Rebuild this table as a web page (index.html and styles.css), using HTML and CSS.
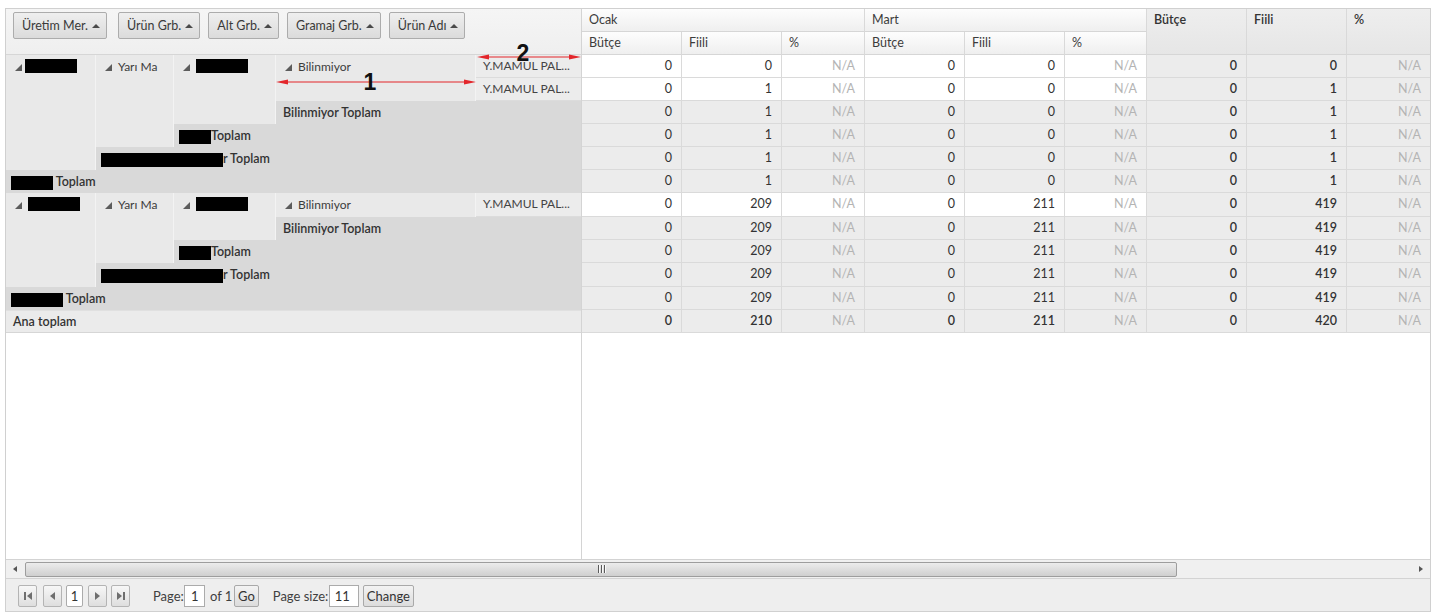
FILE: index.html
```html
<!DOCTYPE html>
<html lang="tr">
<head>
<meta charset="utf-8">
<title>Pivot</title>
<link rel="stylesheet" href="styles.css">
</head>
<body>
<div class="page">
  <div class="pivot">
    <div class="main">
      <div class="left">
        <div class="fieldbar">
          <button class="field f1">Üretim Mer. <span class="up"></span></button>
          <button class="field">Ürün Grb. <span class="up"></span></button>
          <button class="field">Alt Grb. <span class="up"></span></button>
          <button class="field">Gramaj Grb. <span class="up"></span></button>
          <button class="field">Ürün Adı <span class="up"></span></button>
        </div>
        <div class="rowheads">
          <div class="h rs5"><span class="hl"><i class="tri"></i><b class="rx rx52 pull"></b></span></div>
          <div class="h rs4"><span class="hl"><i class="tri"></i>Yarı Ma</span></div>
          <div class="h rs3"><span class="hl"><i class="tri"></i><b class="rx rx52"></b></span></div>
          <div class="h rs2"><span class="hl"><i class="tri"></i>Bilinmiyor</span></div>
          <div class="leaf">Y.MAMUL PAL...</div>
          <div class="leaf">Y.MAMUL PAL...</div>
          <div class="tot cs2 p7">Bilinmiyor Toplam</div>
          <div class="tot cs3"><b class="rx rx32"></b>Toplam</div>
          <div class="tot cs4"><b class="rx rx122"></b>r Toplam</div>
          <div class="tot cs5"><b class="rx rx41"></b> Toplam</div>

          <div class="h rs4"><span class="hl"><i class="tri"></i><b class="rx rx52"></b></span></div>
          <div class="h rs3"><span class="hl"><i class="tri"></i>Yarı Ma</span></div>
          <div class="h rs2"><span class="hl"><i class="tri"></i><b class="rx rx52"></b></span></div>
          <div class="h"><span class="hl"><i class="tri"></i>Bilinmiyor</span></div>
          <div class="leaf">Y.MAMUL PAL...</div>
          <div class="tot cs2 p7">Bilinmiyor Toplam</div>
          <div class="tot cs3"><b class="rx rx32"></b>Toplam</div>
          <div class="tot cs4"><b class="rx rx122"></b>r Toplam</div>
          <div class="tot cs5"><b class="rx rx52"></b> Toplam</div>
          <div class="grand cs5">Ana toplam</div>
        </div>
      </div>

      <div class="right">
        <div class="colheads">
          <div class="hd">Ocak</div>
          <div class="hd">Mart</div>
          <div class="hd ht">Bütçe</div>
          <div class="hd ht">Fiili</div>
          <div class="hd ht last">%</div>
          <div class="hd">Bütçe</div>
          <div class="hd">Fiili</div>
          <div class="hd">%</div>
          <div class="hd">Bütçe</div>
          <div class="hd">Fiili</div>
          <div class="hd">%</div>
        </div>
        <div class="cells">
          <div class="d w">0</div><div class="d w">0</div><div class="d w na">N/A</div><div class="d w">0</div><div class="d w">0</div><div class="d w na">N/A</div><div class="d b">0</div><div class="d b">0</div><div class="d na last">N/A</div>
          <div class="d w">0</div><div class="d w">1</div><div class="d w na">N/A</div><div class="d w">0</div><div class="d w">0</div><div class="d w na">N/A</div><div class="d b">0</div><div class="d b">1</div><div class="d na last">N/A</div>
          <div class="d">0</div><div class="d">1</div><div class="d na">N/A</div><div class="d">0</div><div class="d">0</div><div class="d na">N/A</div><div class="d b">0</div><div class="d b">1</div><div class="d na last">N/A</div>
          <div class="d">0</div><div class="d">1</div><div class="d na">N/A</div><div class="d">0</div><div class="d">0</div><div class="d na">N/A</div><div class="d b">0</div><div class="d b">1</div><div class="d na last">N/A</div>
          <div class="d">0</div><div class="d">1</div><div class="d na">N/A</div><div class="d">0</div><div class="d">0</div><div class="d na">N/A</div><div class="d b">0</div><div class="d b">1</div><div class="d na last">N/A</div>
          <div class="d">0</div><div class="d">1</div><div class="d na">N/A</div><div class="d">0</div><div class="d">0</div><div class="d na">N/A</div><div class="d b">0</div><div class="d b">1</div><div class="d na last">N/A</div>
          <div class="d w">0</div><div class="d w">209</div><div class="d w na">N/A</div><div class="d w">0</div><div class="d w">211</div><div class="d w na">N/A</div><div class="d b">0</div><div class="d b">419</div><div class="d na last">N/A</div>
          <div class="d">0</div><div class="d">209</div><div class="d na">N/A</div><div class="d">0</div><div class="d">211</div><div class="d na">N/A</div><div class="d b">0</div><div class="d b">419</div><div class="d na last">N/A</div>
          <div class="d">0</div><div class="d">209</div><div class="d na">N/A</div><div class="d">0</div><div class="d">211</div><div class="d na">N/A</div><div class="d b">0</div><div class="d b">419</div><div class="d na last">N/A</div>
          <div class="d">0</div><div class="d">209</div><div class="d na">N/A</div><div class="d">0</div><div class="d">211</div><div class="d na">N/A</div><div class="d b">0</div><div class="d b">419</div><div class="d na last">N/A</div>
          <div class="d">0</div><div class="d">209</div><div class="d na">N/A</div><div class="d">0</div><div class="d">211</div><div class="d na">N/A</div><div class="d b">0</div><div class="d b">419</div><div class="d na last">N/A</div>
          <div class="d b">0</div><div class="d b">210</div><div class="d na">N/A</div><div class="d b">0</div><div class="d b">211</div><div class="d na">N/A</div><div class="d b">0</div><div class="d b">420</div><div class="d na last">N/A</div>
        </div>
      </div>
    </div>

    <div class="hscroll">
      <span class="sarrow"><i class="tl"></i></span>
      <div class="track"><div class="thumb"><span class="grip"><i></i><i></i><i></i></span></div></div>
      <span class="sarrow"><i class="tr"></i></span>
    </div>

    <div class="pager">
      <button class="pb"><i class="bar"></i><i class="tl"></i></button>
      <button class="pb m6"><i class="tl"></i></button>
      <span class="pcur">1</span>
      <button class="pb m5"><i class="tr"></i></button>
      <button class="pb m4"><i class="tr"></i><i class="bar"></i></button>
      <span class="plabel">Page:</span>
      <span class="pin pin1">1</span>
      <span class="ptext">of 1</span>
      <button class="tb">Go</button>
      <span class="plabel size">Page size:</span>
      <span class="pin pin2">11</span>
      <button class="tb m4">Change</button>
    </div>
  </div>

  <svg class="annot" width="1437" height="614" viewBox="0 0 1437 614" aria-hidden="true">
    <line x1="283" y1="82" x2="469" y2="82" stroke="#e3262b" stroke-width="1.2"/>
    <polygon points="276,82 288,79.5 288,84.5" fill="#e3262b"/>
    <polygon points="476,82 464,79.5 464,84.5" fill="#e3262b"/>
    <text x="370" y="90" class="anum" text-anchor="middle">1</text>
    <line x1="484" y1="57" x2="574" y2="57" stroke="#e3262b" stroke-width="1.2"/>
    <polygon points="477,57 489,54.5 489,59.5" fill="#e3262b"/>
    <polygon points="581,57 569,54.5 569,59.5" fill="#e3262b"/>
    <text x="523" y="61" class="anum" text-anchor="middle">2</text>
  </svg>
</div>
</body>
</html>
```

FILE: styles.css
```css
* { box-sizing: border-box; margin: 0; padding: 0; }
html, body { background: #fff; }
body {
  font-family: "Lato", "Noto Sans", sans-serif;
  font-size: 12px;
  color: #333;
}
.page { position: relative; padding: 8px 6px 0 5px; }
.pivot {
  height: 604px;
  border: 1px solid #d0d0d0;
  display: flex;
  flex-direction: column;
}
.main { height: 550px; display: flex; }

/* ---------- left pane ---------- */
.left {
  width: 576px;
  border-right: 1px solid #d4d4d4;
  display: flex;
  flex-direction: column;
}
.fieldbar {
  height: 46px;
  display: flex;
  align-items: flex-start;
  gap: 8px;
  padding: 3px 0 0 7px;
  background: linear-gradient(#f5f5f5, #efefef);
  border-bottom: 1px solid #d6d6d6;
}
.field {
  font: inherit;
  font-size: 12.5px;
  color: #3a3a3a;
  height: 27px;
  padding: 0 6px 0 8px;
  display: flex;
  align-items: center;
  gap: 4px;
  border: 1px solid #acacac;
  border-radius: 2px;
  background: linear-gradient(#efefef, #dbdbdb);
}
.field.f1 { margin-right: 3px; }
.up {
  width: 0; height: 0;
  border-left: 4px solid transparent;
  border-right: 4px solid transparent;
  border-bottom: 4px solid #4a4a4a;
}
.rowheads {
  display: grid;
  grid-template-columns: 90px 78px 102px 200px 105px;
  grid-template-rows: 23px 23px 23px 23px 23px 23px 24px 23px 23px 24px 23px 23px;
}
.rs2 { grid-row: span 2; }
.rs3 { grid-row: span 3; }
.rs4 { grid-row: span 4; }
.rs5 { grid-row: span 5; }
.cs2 { grid-column: span 2; }
.cs3 { grid-column: span 3; }
.cs4 { grid-column: span 4; }
.cs5 { grid-column: span 5; }

.h {
  background: #e9e9e9;
  border-right: 1px solid #f3f3f3;
  padding-left: 9px;
  color: #3c3c3c;
}
.hl { display: flex; align-items: center; gap: 6px; height: 22px; }
.tri {
  display: block;
  width: 0; height: 0;
  border-left: 7px solid transparent;
  border-bottom: 7px solid #5c5c5c;
  margin-top: 2px;
}
.rx {
  display: inline-block;
  height: 14px;
  background: #000;
  vertical-align: middle;
}
.rx52 { width: 52px; }
.rx32 { width: 32px; }
.rx122 { width: 122px; }
.rx41 { width: 42px; }
.pull { margin-left: -3px; }

.leaf {
  background: #ececec;
  border-bottom: 1px solid #dcdcdc;
  padding-left: 7px;
  line-height: 22px;
  color: #444;
  white-space: nowrap;
}
.tot {
  background: #d9d9d9;
  font-weight: 600;
  font-size: 12.5px;
  padding-left: 5px;
  line-height: 23px;
  white-space: nowrap;
}
.tot.p7 { padding-left: 7px; }
.grand {
  background: #ebebeb;
  border-bottom: 1px solid #d6d6d6;
  border-top: 1px solid #e0e0e0;
  font-weight: 600;
  font-size: 12.5px;
  padding-left: 7px;
  line-height: 21px;
}

/* ---------- right pane ---------- */
.right { flex: 1; display: flex; flex-direction: column; }
.colheads, .cells {
  display: grid;
  grid-template-columns: 100px 100px 83px 100px 100px 82px 100px 100px 1fr;
}
.colheads { grid-template-rows: 23px 23px; }
.hd {
  background: linear-gradient(#fdfdfd, #efefef);
  border-right: 1px solid #d9d9d9;
  border-bottom: 1px solid #d6d6d6;
  padding-left: 7px;
  line-height: 22px;
  color: #3c3c3c;
  font-size: 12.5px;
}
.colheads .hd:nth-child(1) { grid-column: 1 / span 3; }
.colheads .hd:nth-child(2) { grid-column: 4 / span 3; }
.colheads .hd:nth-child(3) { grid-column: 7; }
.colheads .hd:nth-child(4) { grid-column: 8; }
.colheads .hd:nth-child(5) { grid-column: 9; }
.hd.ht {
  grid-row: 1 / span 2;
  background: linear-gradient(#eeeeee, #e6e6e6);
  font-weight: 600;
  color: #333;
}
.last { border-right: 0 !important; }

.cells {
  grid-template-rows: 23px 23px 23px 23px 23px 23px 24px 23px 23px 24px 23px 23px;
}
.d {
  background: #ececec;
  border-right: 1px solid #dadada;
  border-bottom: 1px solid #dadada;
  text-align: right;
  padding-right: 9px;
  line-height: 22px;
  color: #333;
  font-size: 12.5px;
}
.d.w { background: #fff; }
.d.b { font-weight: 600; }
.d.na { color: #b4b4b4; font-weight: 400; }

/* ---------- scrollbar ---------- */
.hscroll {
  height: 20px;
  display: flex;
  align-items: center;
  background: #f0f0f0;
  border-top: 1px solid #d3d3d3;
  border-bottom: 1px solid #d3d3d3;
}
.sarrow { width: 18px; height: 18px; display: flex; align-items: center; justify-content: center; }
.tl, .tr { display: block; width: 0; height: 0; border-top: 3.5px solid transparent; border-bottom: 3.5px solid transparent; }
.tl { border-right: 4px solid #555; }
.tr { border-left: 4px solid #555; }
.track { flex: 1; height: 16px; display: flex; align-items: center; }
.thumb {
  width: 1152px;
  height: 15px;
  margin-left: 1px;
  border: 1px solid #9d9d9d;
  border-radius: 2px;
  background: linear-gradient(#ececec, #cfcfcf);
  display: flex;
  align-items: center;
  justify-content: center;
}
.grip { display: flex; gap: 2px; }
.grip i { display: block; width: 1px; height: 8px; background: #5a5a5a; box-shadow: 1px 0 0 #fafafa; }

/* ---------- pager ---------- */
.pager {
  flex: 1;
  background: #eeeeee;
  display: flex;
  align-items: center;
  padding: 1px 0 0 12px;
  color: #3f3f3f;
  font-size: 13px;
}
.pb {
  width: 19px;
  height: 22px;
  border: 1px solid #b4b4b4;
  border-radius: 2px;
  background: linear-gradient(#f7f7f7, #dedede);
  display: flex;
  align-items: center;
  justify-content: center;
  gap: 1px;
}
.m4 { margin-left: 4px; }
.m5 { margin-left: 5px; }
.m6 { margin-left: 6px; }
.pb .tl, .pb .tr { border-top-width: 4px; border-bottom-width: 4px; }
.pb .tl { border-right: 5px solid #6e6e6e; }
.pb .tr { border-left: 5px solid #6e6e6e; }
.bar { display: block; width: 2px; height: 8px; background: #6e6e6e; }
.pcur, .pin {
  height: 22px;
  background: #fff;
  border: 1px solid #ababab;
  display: flex;
  align-items: center;
  color: #333;
}
.pcur { width: 17px; margin-left: 4px; justify-content: center; border-radius: 2px; }
.pin1 { width: 21px; padding-left: 6px; }
.pin2 { width: 30px; padding-left: 5px; }
.plabel { width: 31px; margin-left: 23px; white-space: nowrap; }
.plabel.size { width: 56px; margin-left: 14px; }
.ptext { width: 29px; padding-left: 5px; white-space: nowrap; }
.tb {
  font: inherit;
  color: #333;
  height: 22px;
  padding: 0 3px;
  border: 1px solid #a9a9a9;
  border-radius: 2px;
  background: linear-gradient(#f3f3f3, #dcdcdc);
}

/* ---------- annotations ---------- */
.annot { position: absolute; left: 0; top: 0; pointer-events: none; }
.anum { font-family: "Liberation Sans", Arial, sans-serif; font-weight: 700; font-size: 23px; fill: #111; }
```
